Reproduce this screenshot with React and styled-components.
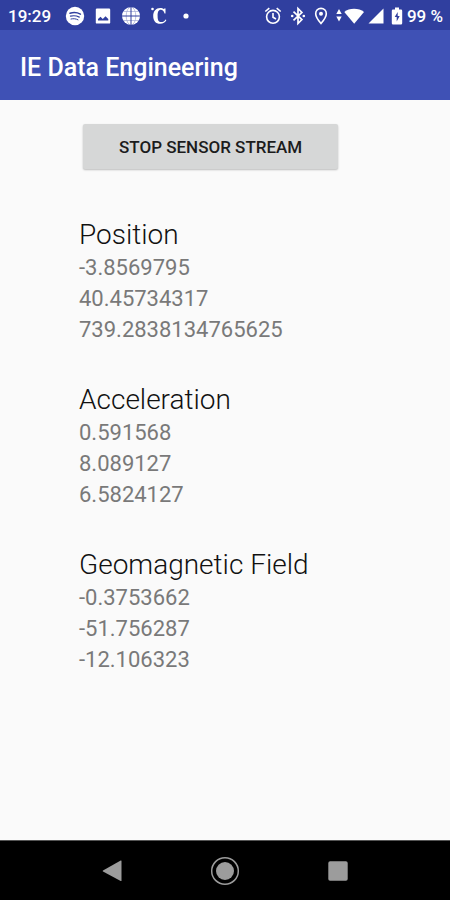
import React from "react";
import styled, { createGlobalStyle } from "styled-components";

const GlobalStyle = createGlobalStyle`
  *, *::before, *::after { box-sizing: border-box; }
  body {
    margin: 0;
    background: #fafafa;
    font-family: Roboto, "Liberation Sans", sans-serif;
  }
`;

const Screen = styled.div`
  display: flex;
  flex-direction: column;
  min-height: 100vh;
  background: #fafafa;
`;

const StatusBar = styled.div`
  display: flex;
  align-items: center;
  justify-content: space-between;
  height: 30px;
  padding: 2px 7px 0 8px;
  background: #303f9f;
  color: #fff;
`;

const StatusGroup = styled.div`
  display: flex;
  align-items: center;
  gap: ${(p) => p.$gap}px;
`;

const StatusText = styled.span`
  font-size: 17px;
  line-height: 24px;
  font-weight: 500;
  white-space: nowrap;
`;

const Glyph = styled.svg`
  display: block;
  flex: none;
  width: ${(p) => p.$w}px;
  height: 20px;
`;

const AppBar = styled.header`
  display: flex;
  align-items: center;
  height: 70px;
  padding: 6px 20px 0;
  background: #3f51b5;
`;

const Title = styled.h1`
  margin: 0;
  color: #fff;
  font-size: 25px;
  line-height: 32px;
  font-weight: 500;
`;

const Content = styled.main`
  flex: 1;
  display: flex;
  flex-direction: column;
  align-items: flex-start;
  padding: 24px 24px 24px 79px;
`;

const StreamButton = styled.button`
  margin: 0 0 49px 4px;
  padding: 12px 36px 10px;
  border: 0;
  border-radius: 2px;
  background: #d6d7d7;
  box-shadow: 0 1px 2px rgba(0, 0, 0, 0.25);
  color: #1c1c1c;
  font-family: inherit;
  font-size: 17px;
  line-height: 23px;
  font-weight: 500;
  text-transform: uppercase;
  white-space: nowrap;
`;

const Sensor = styled.section`
  margin-bottom: 38px;
`;

const SensorName = styled.h2`
  margin: 0;
  color: #111;
  font-size: 28px;
  line-height: 34px;
  font-weight: 350;
`;

const Readings = styled.ul`
  margin: 0;
  padding: 0;
  list-style: none;
`;

const Reading = styled.li`
  color: #797979;
  font-size: 22px;
  line-height: 31px;
  font-weight: 400;
`;

const NavBar = styled.nav`
  display: flex;
  align-items: center;
  justify-content: center;
  gap: 65px;
  height: 60px;
  background: #000;
  border-top: 1px solid #555;
`;

const NavButton = styled.button`
  display: grid;
  place-items: center;
  width: 48px;
  height: 48px;
  padding: 0;
  border: 0;
  background: none;
  color: #9c9c9c;
`;

const NavIcon = styled.svg`
  display: block;
  width: 32px;
  height: 32px;
`;

const sensors = [
  { name: "Position", values: ["-3.8569795", "40.45734317", "739.2838134765625"] },
  { name: "Acceleration", values: ["0.591568", "8.089127", "6.5824127"] },
  { name: "Geomagnetic Field", values: ["-0.3753662", "-51.756287", "-12.106323"] },
];

const MusicIcon = () => (
  <Glyph $w={20} viewBox="0 0 20 20" aria-hidden="true">
    <circle cx="10" cy="10" r="9.2" fill="#fff" />
    <g fill="none" stroke="#303f9f" strokeLinecap="round">
      <path d="M5 7.200c3.600-1 7.400-.7 10.400.9" strokeWidth="1.500" />
      <path d="M5.500 10.200c3-.8 6-.5 8.800.9" strokeWidth="1.200" />
      <path d="M6 13c2.500-.6 4.900-.3 7 .8" strokeWidth="1" />
    </g>
  </Glyph>
);

const ImageIcon = () => (
  <Glyph $w={20} viewBox="0 0 20 20" aria-hidden="true">
    <rect x="2.800" y="2.600" width="14.400" height="15" rx="1.200" fill="#fff" />
    <path d="M5 14.500v-1.500l2.500-2.300 2.300 2.200 2.700-2.700 2.800 2.800v1.500z" fill="#303f9f" />
  </Glyph>
);

const GlobeIcon = () => (
  <Glyph $w={20} viewBox="0 0 20 20" aria-hidden="true">
    <circle cx="10" cy="10" r="9" fill="#fff" />
    <path d="M10 1v18M1 10h18" fill="none" stroke="#303f9f" strokeWidth="1" />
    <g fill="none" stroke="#303f9f" strokeWidth="0.700" opacity="0.450">
      <path d="M3 5.500h14M3 14.500h14" />
      <ellipse cx="10" cy="10" rx="4.800" ry="9" />
    </g>
  </Glyph>
);

const CelsiusIcon = () => (
  <Glyph $w={20} viewBox="0 0 20 20" aria-hidden="true">
    <circle cx="3.500" cy="3" r="1.300" fill="#fff" />
    <path
      d="M16.500 2.500v5h-1c-.6-2.600-2-3.700-3.700-3.700-2.300 0-3.200 2.200-3.200 6.100 0 4.200 1 6.200 3.600 6.200 2 0 3.300-1 4.200-2.700l1 .6c-1.200 2.600-3.200 3.800-6.200 3.800-4.500 0-7-2.900-7-7.800 0-5 2.900-8.100 7-8.100 1.700 0 2.700.4 3.800 1.200l.8-.8z"
      fill="#fff"
    />
  </Glyph>
);

const DotIcon = () => (
  <Glyph $w={20} viewBox="0 0 20 20" aria-hidden="true">
    <circle cx="9" cy="10" r="2.600" fill="#fff" />
  </Glyph>
);

const AlarmIcon = () => (
  <Glyph $w={18} viewBox="0 0 18 20" aria-hidden="true">
    <g fill="none" stroke="#fff" strokeWidth="1.600">
      <circle cx="9" cy="10.800" r="6.400" />
      <path d="M9 7v4.200l3 1.800M1.300 5.500l4-3.300M16.700 5.500l-4-3.300" />
    </g>
  </Glyph>
);

const BluetoothIcon = () => (
  <Glyph $w={16} viewBox="0 0 16 20" aria-hidden="true">
    <path d="M3.500 5.600l8.400 8-3.900 3.900v-15l3.900 3.900-8.400 8" fill="none" stroke="#fff" strokeWidth="1.700" />
    <circle cx="2.200" cy="10" r="1.300" fill="#fff" />
    <circle cx="13.800" cy="10" r="1.300" fill="#fff" />
  </Glyph>
);

const PinIcon = () => (
  <Glyph $w={14} viewBox="0 0 14 20" aria-hidden="true">
    <path d="M7 2.400c-3 0-5.300 2.300-5.300 5.300 0 3.600 5.300 9.800 5.300 9.800s5.300-6.200 5.300-9.800c0-3-2.300-5.300-5.300-5.300z" fill="none" stroke="#fff" strokeWidth="1.600" />
    <circle cx="7" cy="7.700" r="2" fill="#fff" />
  </Glyph>
);

const WifiIcon = () => (
  <Glyph $w={28} viewBox="0 0 28 20" aria-hidden="true">
    <path d="M.3 8l2.700-5 2.700 5zM.3 10.500l2.700 5 2.700-5z" fill="#fff" />
    <path d="M8.300 6C13 1.600 23 1.600 28 6L18.200 17.800z" fill="#fff" />
  </Glyph>
);

const SignalIcon = () => (
  <Glyph $w={16} viewBox="0 0 16 20" aria-hidden="true">
    <path d="M15.500 2.500v15H.5z" fill="#fff" />
  </Glyph>
);

const BatteryIcon = () => (
  <Glyph $w={12} viewBox="0 0 12 20" aria-hidden="true">
    <path d="M4 1.500h4v2h2q1.200 0 1.200 1.200v12.600q0 1.200-1.200 1.200H2q-1.200 0-1.200-1.200V4.700q0-1.200 1.200-1.200h2z" fill="#fff" />
    <path d="M6.700 6l-3 5h2v4.500l3-5.500h-2z" fill="#303f9f" />
  </Glyph>
);

export default function App() {
  return (
    <>
      <GlobalStyle />
      <Screen>
        <StatusBar>
          <StatusGroup $gap={14}>
            <StatusText>19:29</StatusText>
            <StatusGroup $gap={8}>
              <MusicIcon />
              <ImageIcon />
              <GlobeIcon />
              <CelsiusIcon />
              <DotIcon />
            </StatusGroup>
          </StatusGroup>
          <StatusGroup $gap={4}>
            <StatusGroup $gap={8}>
              <AlarmIcon />
              <BluetoothIcon />
              <PinIcon />
              <WifiIcon />
            </StatusGroup>
            <StatusGroup $gap={7}>
              <SignalIcon />
              <BatteryIcon />
            </StatusGroup>
            <StatusText>99 %</StatusText>
          </StatusGroup>
        </StatusBar>
        <AppBar>
          <Title>IE Data Engineering</Title>
        </AppBar>
        <Content>
          <StreamButton type="button">Stop sensor stream</StreamButton>
          {sensors.map((sensor) => (
            <Sensor key={sensor.name}>
              <SensorName>{sensor.name}</SensorName>
              <Readings>
                {sensor.values.map((value) => (
                  <Reading key={value}>{value}</Reading>
                ))}
              </Readings>
            </Sensor>
          ))}
        </Content>
        <NavBar aria-label="System navigation">
          <NavButton type="button" aria-label="Back">
            <NavIcon viewBox="0 0 32 32">
              <path d="M25.500 6v19.500q0 .8-.8.4L7 16.500q-.8-.5 0-1L24.700 5.600q.8-.4.800.4z" fill="currentColor" />
            </NavIcon>
          </NavButton>
          <NavButton type="button" aria-label="Home">
            <NavIcon viewBox="0 0 32 32">
              <circle cx="16" cy="16" r="13.300" fill="none" stroke="currentColor" strokeWidth="1.500" />
              <circle cx="16" cy="16" r="9" fill="currentColor" />
            </NavIcon>
          </NavButton>
          <NavButton type="button" aria-label="Overview">
            <NavIcon viewBox="0 0 32 32">
              <rect x="6.300" y="6.300" width="19.400" height="19.400" rx="1.800" fill="currentColor" />
            </NavIcon>
          </NavButton>
        </NavBar>
      </Screen>
    </>
  );
}
